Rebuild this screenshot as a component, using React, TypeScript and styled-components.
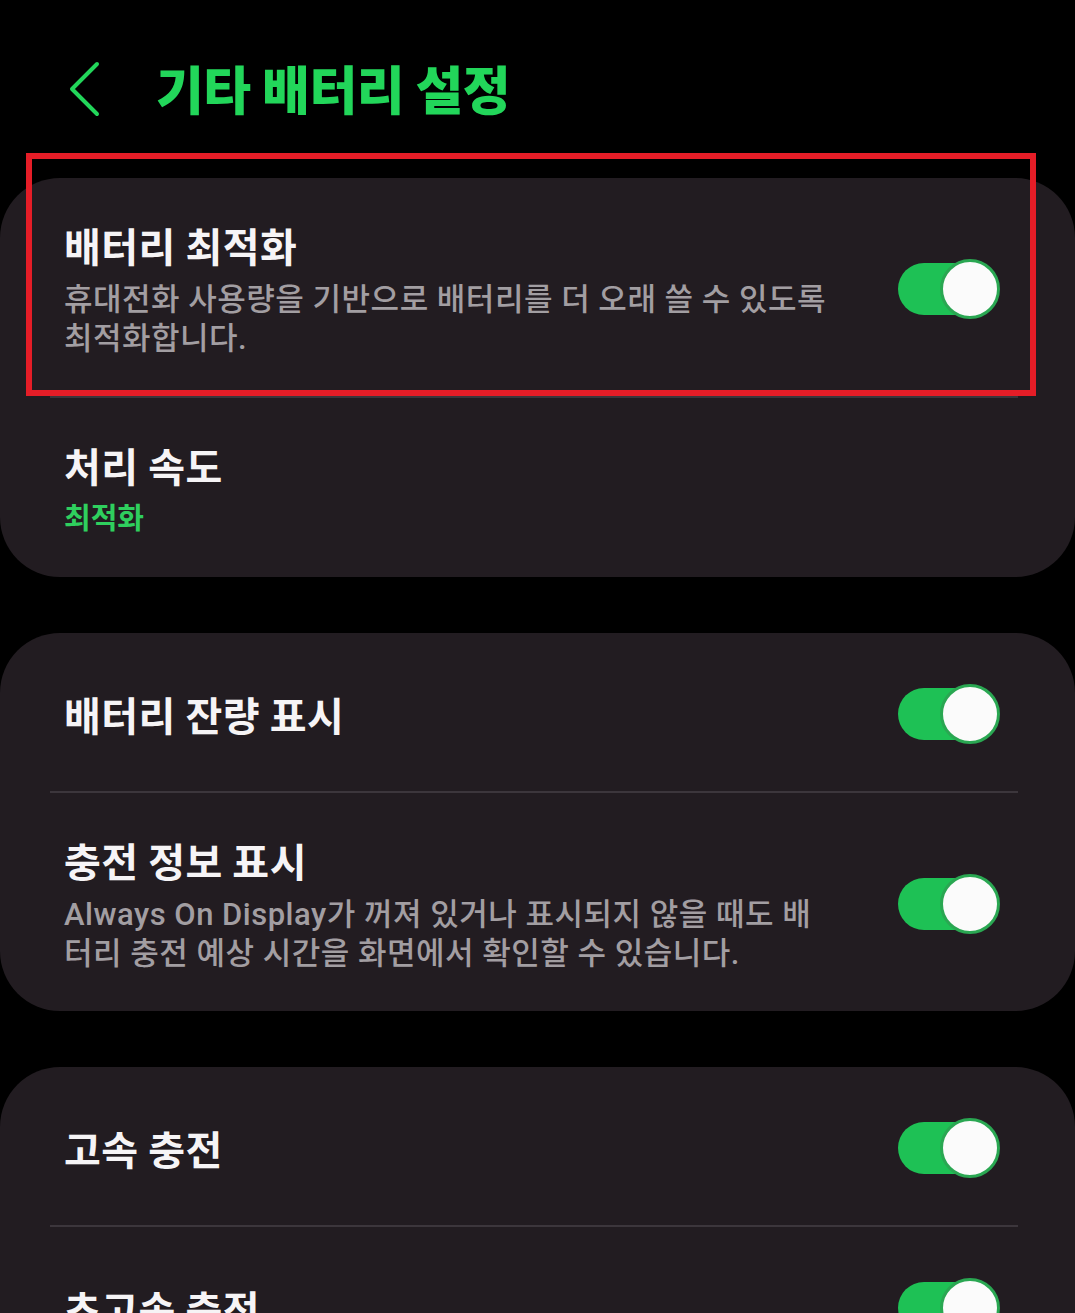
import React from 'react';
import styled, { createGlobalStyle } from 'styled-components';

const GlobalStyle = createGlobalStyle`
  html, body {
    margin: 0;
    padding: 0;
    background: #000000;
  }
  body {
    font-family: "Noto Sans CJK KR", "Noto Sans", Roboto, sans-serif;
    -webkit-font-smoothing: antialiased;
  }
`;

const Page = styled.div`
  position: relative;
  width: 1075px;
  min-height: 1313px;
  background: #000000;
  overflow: hidden;
`;

const Header = styled.header`
  display: flex;
  align-items: center;
  gap: 54px;
  height: 178px;
  padding-left: 68px;
  box-sizing: border-box;
`;

const BackButton = styled.button`
  display: flex;
  align-items: center;
  justify-content: center;
  padding: 0;
  border: none;
  background: none;
  cursor: pointer;
`;

const PageTitle = styled.h1`
  margin: 0;
  font-size: 52px;
  font-weight: 900;
  line-height: 1;
  letter-spacing: -0.5px;
  color: #22d65a;
  transform: translateY(-1px);
`;

const Sections = styled.main`
  display: flex;
  flex-direction: column;
  gap: 56px;
`;

const Card = styled.section`
  background: #221c21;
  border-radius: 60px;
`;

const Row = styled.div`
  display: flex;
  align-items: center;
  min-height: 158px;
  padding: 42px 85px 38px 64px;
  box-sizing: border-box;
`;

const TextBlock = styled.div`
  flex: 1;
  display: flex;
  flex-direction: column;
  margin-right: 63px;
`;

const ItemTitle = styled.div`
  font-size: 40px;
  font-weight: 700;
  line-height: 50px;
  letter-spacing: 0.5px;
  color: #f6f4f6;
`;

const ItemSub = styled.div<{ $accent?: boolean }>`
  margin-top: 10px;
  font-family: Roboto, "Noto Sans CJK KR", sans-serif;
  font-size: ${({ $accent }) => ($accent ? '29px' : '31px')};
  font-weight: ${({ $accent }) => ($accent ? 700 : 500)};
  line-height: 39px;
  letter-spacing: ${({ $accent }) => ($accent ? '0' : '0.5px')};
  color: ${({ $accent }) => ($accent ? '#2fcf5e' : '#a29ea2')};
`;

const Divider = styled.hr`
  margin: 0 57px 0 50px;
  height: 2px;
  border: none;
  background: #3c363c;
`;

const Track = styled.span<{ $on: boolean }>`
  position: relative;
  display: block;
  flex: none;
  width: 92px;
  height: 52px;
  border-radius: 26px;
  background: ${({ $on }) => ($on ? '#1ec155' : '#5a555a')};
`;

const Thumb = styled.span<{ $on: boolean }>`
  position: absolute;
  top: -4px;
  ${({ $on }) => ($on ? 'right: -10px;' : 'left: -10px;')}
  width: 60px;
  height: 60px;
  box-sizing: border-box;
  border-radius: 50%;
  background: #fbfbfb;
  border: 3px solid #2aa752;
`;

const Highlight = styled.div`
  position: absolute;
  left: 26px;
  top: 153px;
  width: 1010px;
  height: 243px;
  box-sizing: border-box;
  border: 6px solid #e51d27;
  pointer-events: none;
`;

type Item = {
  title: string;
  sub?: string;
  accent?: boolean;
  toggle?: boolean;
};

const groups: Item[][] = [
  [
    {
      title: '배터리 최적화',
      sub: '휴대전화 사용량을 기반으로 배터리를 더 오래 쓸 수 있도록 최적화합니다.',
      toggle: true,
    },
    { title: '처리 속도', sub: '최적화', accent: true },
  ],
  [
    { title: '배터리 잔량 표시', toggle: true },
    {
      title: '충전 정보 표시',
      sub: 'Always On Display가 꺼져 있거나 표시되지 않을 때도 배터리 충전 예상 시간을 화면에서 확인할 수 있습니다.',
      toggle: true,
    },
  ],
  [
    { title: '고속 충전', toggle: true },
    { title: '초고속 충전', toggle: true },
  ],
];

function Toggle({ on }: { on: boolean }) {
  return (
    <Track $on={on}>
      <Thumb $on={on} />
    </Track>
  );
}

function BackIcon() {
  return (
    <svg width="34" height="56" viewBox="0 0 34 56" fill="none">
      <polyline
        points="29,3 4,28 29,53"
        stroke="#22d65a"
        strokeWidth="4"
        strokeLinecap="round"
        strokeLinejoin="round"
      />
    </svg>
  );
}

export default function App() {
  return (
    <>
      <GlobalStyle />
      <Page>
        <Header>
          <BackButton aria-label="뒤로">
            <BackIcon />
          </BackButton>
          <PageTitle>기타 배터리 설정</PageTitle>
        </Header>
        <Sections>
          {groups.map((items, gi) => (
            <Card key={gi}>
              {items.map((item, i) => (
                <React.Fragment key={item.title}>
                  {i > 0 && <Divider />}
                  <Row>
                    <TextBlock>
                      <ItemTitle>{item.title}</ItemTitle>
                      {item.sub && <ItemSub $accent={item.accent}>{item.sub}</ItemSub>}
                    </TextBlock>
                    {item.toggle !== undefined && <Toggle on={item.toggle} />}
                  </Row>
                </React.Fragment>
              ))}
            </Card>
          ))}
        </Sections>
        <Highlight />
      </Page>
    </>
  );
}
